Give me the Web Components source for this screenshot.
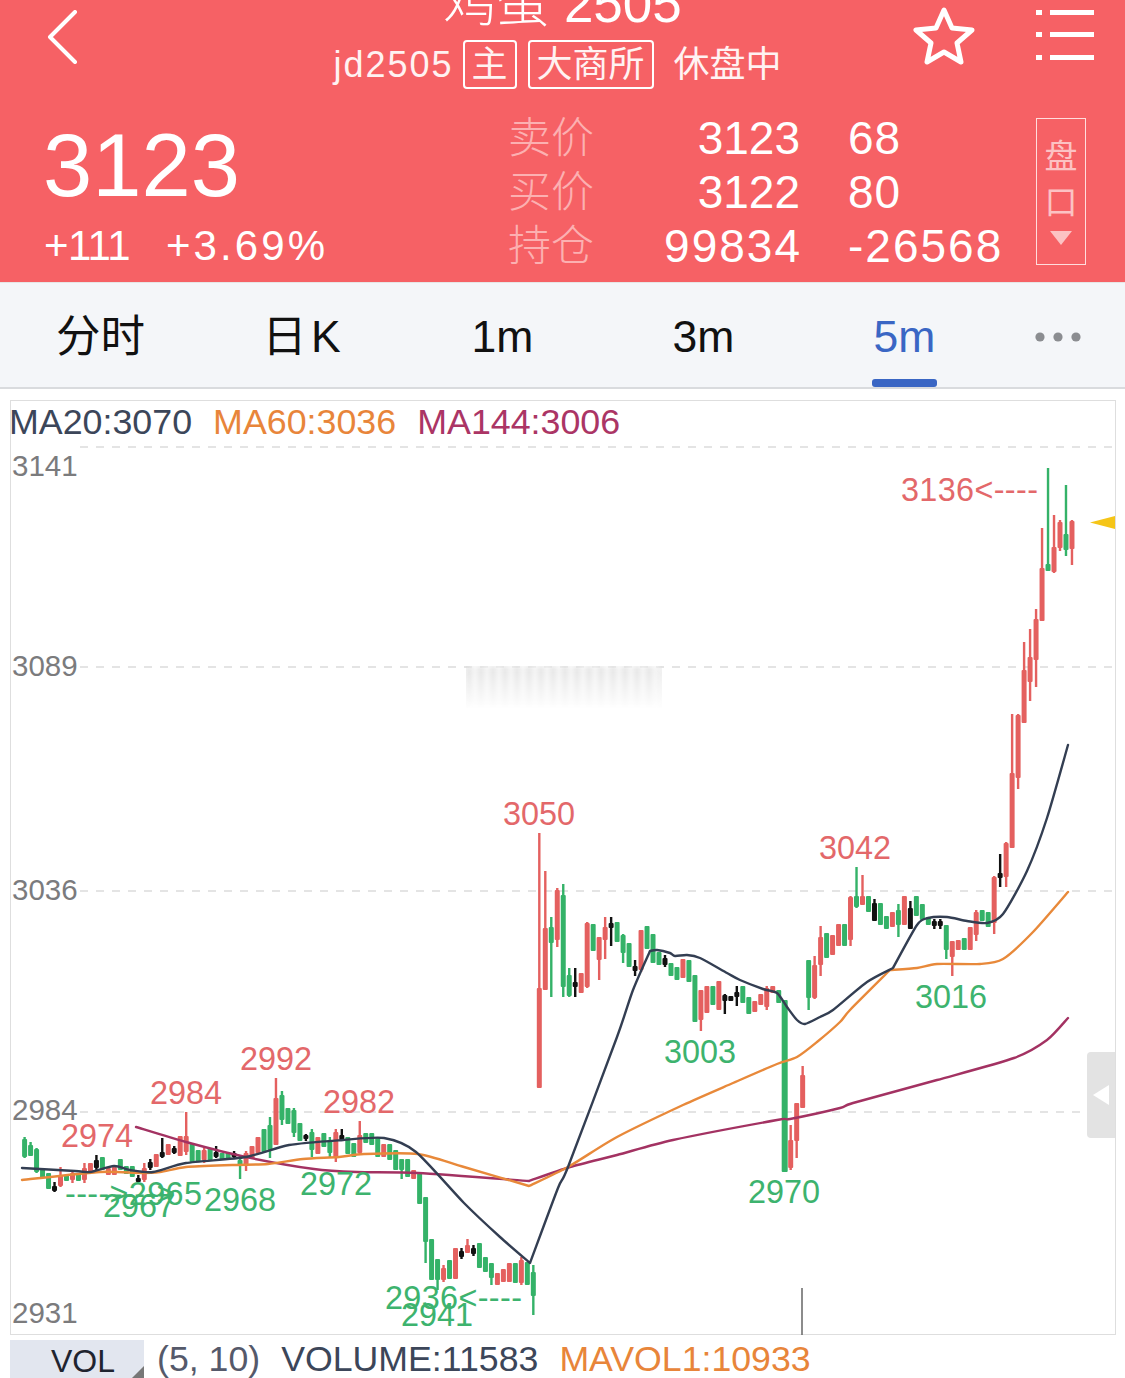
<!DOCTYPE html>
<html lang="zh">
<head>
<meta charset="utf-8">
<title>jd2505</title>
<style>
  html, body { margin: 0; background: #fff; }
  body { width: 1125px; height: 1378px; overflow: hidden; font-family: "Liberation Sans", "Noto Sans CJK SC", sans-serif; }
</style>
</head>
<body>
<stock-header></stock-header>
<period-bar>
  <period-tab>分时</period-tab>
  <period-tab>日 K</period-tab>
  <period-tab>1m</period-tab>
  <period-tab>3m</period-tab>
  <period-tab active>5m</period-tab>
  <period-tab more></period-tab>
</period-bar>
<kline-chart></kline-chart>
<vol-bar></vol-bar>

<script>
const FONT = `"Liberation Sans", "Noto Sans CJK SC", sans-serif`;

class StockHeader extends HTMLElement {
  constructor() {
    super();
    this.attachShadow({ mode: "open" });
  }

  connectedCallback() {
    this.shadowRoot.innerHTML = `
    <style>
      :host { display: block; height: 282px; overflow: hidden; background: #f66165; color: #fff; font-family: ${FONT}; }
      .top { display: grid; grid-template-columns: 212px 1fr 212px; height: 100px; }
      .back { margin: 10px 0 0 47px; width: 32px; height: 54px; }
      .center { display: flex; flex-direction: column; align-items: center; }
      .title { font-size: 53px; line-height: 60px; margin-top: -26px; height: 60px; white-space: nowrap; font-weight: 300; }
      .sub { display: flex; align-items: center; font-size: 36px; line-height: 49px; margin: 6px 0 0 -10px; color: #fff2f2; white-space: nowrap; }
      .code { letter-spacing: 2px; }
      .tag { border: 2px solid #fff; border-radius: 4px; padding: 0 7px; height: 45px; line-height: 45px; margin-left: 11px; }
      .code + .tag { margin-left: 9px; }
      .state { margin-left: 20px; }
      .icons { display: flex; align-items: flex-start; justify-content: flex-end; padding-right: 31px; gap: 61px; }
      .icons svg { flex: none; }
      .star { margin-top: 6px; }
      .menu { margin-top: 8px; }
      .quote { display: flex; padding: 17px 39px 0 43px; }
      .price { width: 467px; }
      .last { font-size: 88.5px; line-height: 88px; margin-top: 5px; }
      .chg { display: flex; gap: 36px; font-size: 42px; line-height: 48px; margin: 12px 0 0 1px; }
      .one { letter-spacing: -0.6px; }
      .pct { letter-spacing: 3.1px; }
      .table { width: 526px; display: grid; grid-template-columns: 138px 152px 1fr; grid-auto-rows: 54px; margin-top: -6px; font-size: 46px; line-height: 54px; }
      .table .lbl { font-size: 43px; color: #fcb0b1; font-weight: 300; margin-left: -2px; }
      .table .num { text-align: right; }
      .table .wide { letter-spacing: 2px; margin-right: -2px; }
      .table .vol { padding-left: 48px; white-space: nowrap; }
      .table .two { letter-spacing: 1px; }
      .side { box-sizing: border-box; width: 50px; height: 147px; border: 1px solid #fdd; margin-top: 1px; display: flex; flex-direction: column; align-items: center; color: #fcc2c3; font-size: 33px; line-height: 46px; padding-top: 15px; }
      .side svg { margin-top: 5px; }
    </style>
    <div class="top">
      <svg class="back" viewBox="0 0 32 54" fill="none" stroke="#fff" stroke-width="4" stroke-linecap="round" stroke-linejoin="round"><path d="M28 2 3 27l25 25"/></svg>
      <div class="center">
        <div class="title">鸡蛋 2505</div>
        <div class="sub"><span class="code">jd2505</span><span class="tag">主</span><span class="tag">大商所</span><span class="state">休盘中</span></div>
      </div>
      <div class="icons">
        <svg class="star" width="62" height="60" viewBox="0 0 62 60" fill="none" stroke="#fff" stroke-width="5" stroke-linejoin="round"><path d="M31 4l8 18 20 2-15 13 4 19-17-10-17 10 4-19L3 24l20-2z"/></svg>
        <svg class="menu" width="58" height="54" viewBox="0 0 58 54" fill="#fff"><rect x="0" y="2" width="6" height="5"/><rect x="14" y="2" width="44" height="5"/><rect x="0" y="24" width="6" height="5"/><rect x="14" y="24" width="44" height="5"/><rect x="0" y="47" width="6" height="5"/><rect x="14" y="47" width="44" height="5"/></svg>
      </div>
    </div>
    <div class="quote">
      <div class="price">
        <div class="last">3123</div>
        <div class="chg"><span class="one">+111</span><span class="pct">+3.69%</span></div>
      </div>
      <div class="table">
        <span class="lbl">卖价</span><span class="num">3123</span><span class="vol two">68</span>
        <span class="lbl">买价</span><span class="num">3122</span><span class="vol two">80</span>
        <span class="lbl">持仓</span><span class="num wide">99834</span><span class="vol wide">-26568</span>
      </div>
      <div class="side"><span>盘</span><span>口</span><svg width="22" height="14" viewBox="0 0 22 14"><path d="M0 0h22L11 14z" fill="#fcc2c3"/></svg></div>
    </div>`;
  }
}

class PeriodBar extends HTMLElement {
  constructor() {
    super();
    this.attachShadow({ mode: "open" });
  }

  connectedCallback() {
    this.shadowRoot.innerHTML = `
    <style>
      :host { display: grid; grid-template-columns: repeat(5, 201px) 120px; height: 107px; box-sizing: border-box; background: #f4f6f9; border-top: 1px solid #e6e6e6; border-bottom: 2px solid #d9dbde; }
    </style>
    <slot></slot>`;
  }
}

class PeriodTab extends HTMLElement {
  constructor() {
    super();
    this.attachShadow({ mode: "open" });
  }

  connectedCallback() {
    const more = this.hasAttribute("more");
    this.shadowRoot.innerHTML = `
    <style>
      :host { display: flex; flex-direction: column; align-items: center; color: #111; font: 44.5px/1 ${FONT}; word-spacing: -8px; }
      :host([active]) { color: #3a66c4; }
      .txt { margin-top: 32px; height: 60px; white-space: nowrap; }
      .bar { width: 65px; height: 8px; border-radius: 3px; background: #3a66c4; visibility: hidden; margin-top: 4px; }
      :host([active]) .bar { visibility: visible; }
      .dots { margin: 48px 14px 0 0; }
    </style>
    ${more
      ? `<svg class="dots" width="46" height="12" viewBox="0 0 46 12" fill="#8b8d91"><circle cx="5" cy="6" r="4.6"/><circle cx="23" cy="6" r="4.6"/><circle cx="41" cy="6" r="4.6"/></svg>`
      : `<div class="txt"><slot></slot></div><div class="bar"></div>`}`;
  }
}

// candles: colour, high, low, body top, body bottom (page pixels)
const CANDLES = [
  ["g",1137,1158,1139,1157],["g",1142,1156,1145,1156],["g",1148,1173,1149,1172],["g",1168,1178],["g",1173,1189],
  ["k",1182,1192,1186,1191],["r",1167,1187,1175,1186],["g",1175,1181],["r",1171,1183,1173,1180],["g",1173,1181],
  ["r",1163,1183,1168,1180],["r",1163,1173],["k",1155,1171,1160,1168],["g",1157,1170],["r",1168,1175],
  ["r",1167,1175],["g",1159,1170],["g",1166,1174],["g",1166,1177],["k",1175,1182,1178,1182],
  ["r",1163,1182,1168,1180],["k",1159,1170,1162,1168],["r",1154,1167],["k",1138,1158,1152,1157],["r",1144,1155],
  ["k",1146,1154,1148,1153],["r",1136,1156],["r",1112,1155,1136,1152],["g",1143,1162],["g",1150,1162],
  ["r",1148,1163,1150,1160],["g",1148,1160],["k",1146,1158,1152,1157],["g",1153,1160],["g",1153,1160],
  ["k",1151,1158,1153,1157],["g",1155,1179,1160,1165],["r",1151,1171,1153,1166],["r",1146,1159],["r",1137,1153],
  ["g",1129,1152],["g",1117,1158,1125,1150],["r",1078,1145,1098,1145],["g",1091,1125,1095,1120],["g",1108,1124],
  ["g",1108,1137,1110,1133],["g",1123,1141],["k",1134,1141,1135,1139],["g",1129,1157,1132,1150],["r",1137,1154],
  ["g",1133,1147],["g",1137,1157,1140,1153],["r",1129,1162,1132,1158],["k",1129,1140,1135,1140],["g",1137,1154],
  ["g",1143,1157],["r",1121,1154,1135,1153],["g",1133,1143],["g",1133,1145],["g",1138,1157],
  ["r",1144,1157],["g",1144,1160],["g",1150,1170],["g",1159,1179,1159,1170],["g",1159,1177],
  ["r",1170,1179],["g",1173,1204],["g",1197,1263,1197,1242],["g",1239,1280],["g",1259,1290,1259,1280],
  ["r",1265,1282,1268,1280],["g",1260,1279],["r",1248,1279],["k",1248,1259,1251,1257],["r",1239,1253,1245,1253],
  ["k",1245,1256,1248,1254],["g",1243,1268],["g",1257,1272],["g",1263,1285,1263,1278],["r",1273,1285],
  ["r",1269,1282],["r",1263,1282],["g",1263,1283],["r",1257,1285,1260,1283],["g",1262,1285],["g",1265,1315,1272,1296],
  ["r",833,1088,988,1088],["r",871,990,928,990],["g",917,997,927,943],["r",888,947,890,940],["g",884,997,895,987],
  ["g",968,997,975,996],["k",968,997,982,987],["r",973,993],["r",922,988,923,987],["g",924,951],
  ["r",937,980,937,960],["r",917,959,927,940],["k",917,946,923,928],["g",922,942],["g",934,963,935,953],
  ["g",943,967],["k",960,976,966,971],["r",930,972,930,970],["g",926,949],["g",934,963],
  ["g",952,965],["k",955,967,958,965],["g",963,976],["g",967,980],["r",959,978],
  ["g",960,982],["g",975,1022],["r",990,1031,990,1020],["r",986,1013],["g",986,1005],
  ["r",981,1010],["k",994,1014,995,1001],["k",996,1001],["k",986,1006,992,997],["g",986,1003],
  ["g",997,1014],["r",1001,1012],["r",994,1005],["r",986,1010,988,1007],["r",986,993],
  ["g",990,1003],["g",1000,1172],["r",1125,1170,1140,1168],["r",1103,1158,1103,1141],["r",1066,1108,1075,1108],
  ["g",960,1010,960,998],["r",956,999,965,998],["r",926,976,937,965],["g",933,958],["r",935,955],
  ["r",924,946],["g",924,946],["r",896,946,897,940],["g",867,908,896,907],["r",875,905,896,905],
  ["g",896,912],["k",899,921,903,921],["g",903,925],["g",916,929],["r",912,927],
  ["g",904,937,910,925],["r",896,925],["k",901,929,908,929],["g",896,916],["g",904,920],
  ["g",917,925],["k",919,929,921,926],["k",919,929,921,926],["g",925,959,925,950],["r",941,976,941,957],
  ["r",940,950],["g",938,950],["r",927,950],["r",910,941,912,935],["g",910,921],
  ["g",912,927],["r",876,934,877,923],["k",854,887,873,878],["r",842,887,843,877],["r",714,848,773,848],
  ["r",714,789,715,778],["r",642,723,670,723],["r",629,701,657,682],["r",609,687,619,660],["r",528,621,568,621],
  ["g",468,571,564,571],["r",515,573,547,572],["r",520,551,522,548],["g",485,556,534,550],["r",520,565,521,549]
];

// a doubled point makes a hard corner in the curve
const MA20 = [[22,1168],[75,1171],[90,1172],[114,1166],[130,1170],[153,1172],[186,1163],[246,1157],[289,1145],[343,1140],[384,1138],[416,1152],[464,1203],[500,1237],[530,1263],[530,1263],[558,1188],[568,1167],[617,1037],[633,990],[650,951],[650,951],[657,950],[670,953],[675,956],[687,955],[700,958],[727,973],[740,980],[763,989],[777,993],[787,1007],[797,1020],[805,1024],[820,1017],[833,1010],[867,982],[893,968],[893,968],[917,925],[928,918],[947,917],[967,921],[987,923],[1003,914],[1027,871],[1047,818],[1068,745]];
const MA60 = [[22,1180],[100,1172],[139,1173],[160,1172],[186,1167],[232,1165],[268,1164],[303,1159],[339,1157],[364,1154],[418,1154],[464,1167],[529,1186],[529,1186],[568,1167],[617,1137],[683,1105],[733,1083],[777,1064],[797,1057],[817,1042],[840,1022],[850,1010],[890,970],[890,970],[917,968],[937,964],[980,964],[1003,959],[1033,932],[1068,892]];
const MA144 = [[136,1127],[186,1142],[246,1157],[314,1169],[357,1172],[418,1173],[529,1181],[529,1181],[570,1167],[617,1155],[673,1140],[777,1120],[790,1119],[840,1108],[853,1103],[937,1080],[1014,1058],[1047,1040],[1068,1018]];

const RED = "#e3686a", GREEN = "#3db36e";
const LABELS = [
  ["3136<----",901,501,RED],["3050",503,825,RED],["3042",819,859,RED],["2992",240,1070,RED],["2984",150,1104,RED],["2982",323,1113,RED],["2974",61,1147,RED],
  ["3003",664,1063,GREEN],["3016",915,1008,GREEN],["2970",748,1203,GREEN],["2972",300,1195,GREEN],["2968",204,1211,GREEN],
  ["---->2965",65,1205,GREEN],["---->",112,1205,GREEN],["2967",103,1217,GREEN],["2936<----",385,1309,GREEN],["2941",401,1326,GREEN]
];
const AXIS = [["3141",476],["3089",676],["3036",900],["2984",1120],["2931",1323]];

function candleSvg(c, i) {
  const x = 24.6 + 5.985 * i;
  const fill = c[0] === "g" ? "#34b268" : c[0] === "r" ? "#e4605f" : "#111";
  const top = c[3] ?? c[1], bot = c[4] ?? c[2];
  const w = top === 1000 && bot === 1172 ? 6 : 5;
  return `<rect x="${x - 1.2}" y="${c[1]}" width="2.4" height="${c[2] - c[1]}" fill="${fill}"/>` +
    `<rect x="${x - w / 2}" y="${top}" width="${w}" height="${bot - top}" rx="1" fill="${fill}"/>`;
}

// catmull-rom through the points, tightened a bit so the sharp turns stay sharp
function linePath(pts) {
  let d = `M${pts[0][0]} ${pts[0][1]}`;
  for (let i = 0; i < pts.length - 1; i++) {
    const p1 = pts[i], p2 = pts[i + 1];
    if (p1[0] === p2[0] && p1[1] === p2[1]) continue;
    const prev = pts[i - 1], next = pts[i + 2];
    const p0 = prev && !(prev[0] === p1[0] && prev[1] === p1[1]) ? prev : p1;
    const p3 = next && !(next[0] === p2[0] && next[1] === p2[1]) ? next : p2;
    const k = 1 / 8;
    d += `C${p1[0] + (p2[0] - p0[0]) * k} ${p1[1] + (p2[1] - p0[1]) * k} ${p2[0] - (p3[0] - p1[0]) * k} ${p2[1] - (p3[1] - p1[1]) * k} ${p2[0]} ${p2[1]}`;
  }
  return d;
}

class KlineChart extends HTMLElement {
  constructor() {
    super();
    this.attachShadow({ mode: "open" });
  }

  connectedCallback() {
    const grid = [447, 667, 891, 1112].map(y => `<line x1="80" x2="1115" y1="${y}" y2="${y}" stroke="#dcdcdc" stroke-width="1.5" stroke-dasharray="8 8"/>`).join("");
    const axis = AXIS.map(a => `<text x="12" y="${a[1]}" font-size="29.5" fill="#7b7b7d">${a[0]}</text>`).join("");
    const labels = LABELS.map(l => `<text x="${l[1]}" y="${l[2]}" font-size="32.4" letter-spacing="${l[0].length > 4 ? 0.35 : 0}" fill="${l[3]}">${l[0].replace("<", "&lt;").replace(">", "&gt;")}</text>`).join("");
    this.shadowRoot.innerHTML = `
    <style>
      :host { display: block; position: relative; box-sizing: border-box; width: 1106px; height: 935px; margin: 11px 0 0 10px; border: 1px solid #dedede; font-family: ${FONT}; }
      svg { position: absolute; left: -1px; top: -1px; font-family: ${FONT}; }
      .legend { position: relative; display: flex; gap: 21px; font-size: 35.8px; line-height: 42px; margin: 0 0 0 -2px; white-space: nowrap; }
      .smudge { position: absolute; left: 455px; top: 265px; width: 196px; height: 42px; filter: blur(3px);
        background: repeating-linear-gradient(90deg, #d8d8d8 0 6px, #fff 6px 12px);
        -webkit-mask-image: linear-gradient(#000, rgba(0,0,0,.3) 75%, rgba(0,0,0,.08)); mask-image: linear-gradient(#000, rgba(0,0,0,.3) 75%, rgba(0,0,0,.08)); }
      .handle { position: absolute; right: 0; top: 651px; width: 28px; height: 86px; background: #e3e3e3; border-radius: 4px 0 0 4px; display: flex; align-items: center; justify-content: center; }
    </style>
    <svg width="1106" height="936" viewBox="10 400 1106 936">
      ${grid}${axis}
      ${CANDLES.map(candleSvg).join("")}
      <g fill="none" stroke-linejoin="round" stroke-linecap="round">
        <path d="${linePath(MA144)}" stroke="#a33262" stroke-width="2.4"/>
        <path d="${linePath(MA60)}" stroke="#e8893a" stroke-width="2.4"/>
        <path d="${linePath(MA20)}" stroke="#333e52" stroke-width="2.4"/>
      </g>
      ${labels}
      <path d="M1090 522.5 1115 516v13z" fill="#f5c518"/>
      <line x1="802" x2="802" y1="1288" y2="1335" stroke="#666" stroke-width="1.5"/>
    </svg>
    <div class="legend"><span style="color:#3c4659">MA20:3070</span><span style="color:#e8853a">MA60:3036</span><span style="color:#ab3565">MA144:3006</span></div>
    <div class="smudge"></div>
    <div class="handle"><svg style="position:static" width="16" height="20" viewBox="0 0 16 20"><path d="M16 0v20L0 10z" fill="#fff"/></svg></div>`;
  }
}

class VolBar extends HTMLElement {
  constructor() {
    super();
    this.attachShadow({ mode: "open" });
  }

  connectedCallback() {
    this.shadowRoot.innerHTML = `
    <style>
      :host { display: flex; align-items: stretch; height: 38px; margin: 5px 0 0 10px; font: 35.7px/38px ${FONT}; white-space: nowrap; }
      .vol { position: relative; width: 134px; background: #e2e6ef; color: #1f2430; font-size: 32px; line-height: 42px; text-align: right; padding-right: 29px; box-sizing: border-box; }
      .vol::after { content: ""; position: absolute; right: 0; bottom: 0; border-style: solid; border-width: 0 0 12px 12px; border-color: transparent transparent #777 transparent; }
      .args { margin-left: 13px; color: #55596a; }
      .v { margin-left: 21px; color: #3c4659; }
      .m { margin-left: 21px; color: #e8853a; }
    </style>
    <div class="vol">VOL</div><span class="args">(5, 10)</span><span class="v">VOLUME:11583</span><span class="m">MAVOL1:10933</span>`;
  }
}

customElements.define("stock-header", StockHeader);
customElements.define("period-bar", PeriodBar);
customElements.define("period-tab", PeriodTab);
customElements.define("kline-chart", KlineChart);
customElements.define("vol-bar", VolBar);
</script>
</body>
</html>
